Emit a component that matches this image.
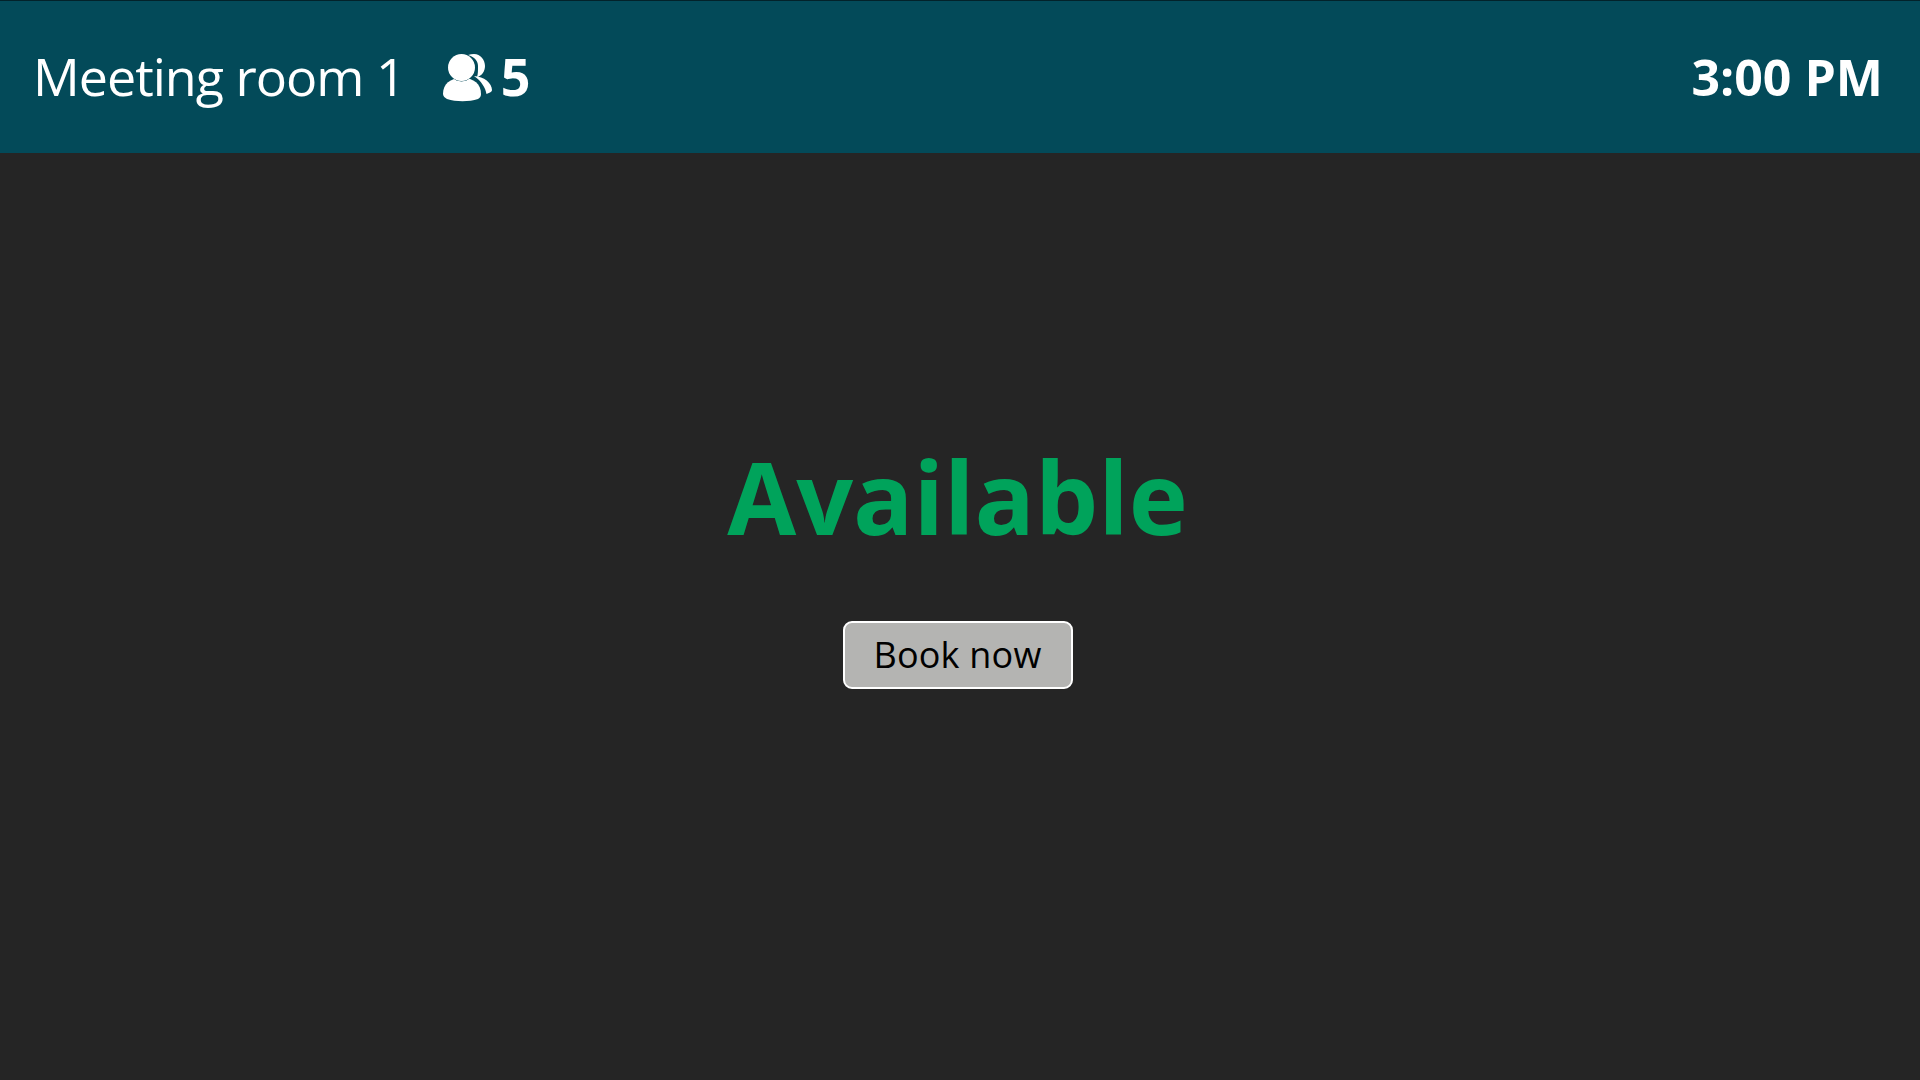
<div class="page">
  <header class="bar">
    <div class="room">
      <span class="name">Meeting room 1</span>
      <svg class="icon" viewBox="0 0 50 48" aria-hidden="true">
        <path d="M25 1c2-.7 4-1 6-1 6.500 0 11 6 11 12 0 5-3 10-8 11 1-3 1-6 1-11 0-4-2-8.500-10-11z" fill="#fff" />
        <path d="M31 22c10 .5 18 7 18 14 0 1-1 2-2 2.500l-3.500 1.500c-1-6-5-13-12.500-18z" fill="#fff" />
        <g fill="#fff" stroke="#034a59" stroke-width="1" paint-order="stroke">
          <path d="M0 40c0-10 7-16 19-16s19 6 19 16c0 2-1 4-3 5-9 3-22 3-31 0-2-1-4-3-4-5z" />
          <circle cx="18.500" cy="13.500" r="13.500" />
        </g>
      </svg>
      <span class="count">5</span>
    </div>
    <span class="time">3:00 PM</span>
  </header>
  <main class="body">
    <h1 class="status">Available</h1>
    <button class="book">Book now</button>
  </main>
</div>

<style>
  :global(body) {
    margin: 0;
    background: #252525;
  }
  .page {
    display: flex;
    flex-direction: column;
    height: 1080px;
    background: #252525;
    font-family: "Open Sans", sans-serif;
    overflow: hidden;
  }
  .bar {
    display: flex;
    align-items: center;
    justify-content: space-between;
    box-sizing: border-box;
    height: 153px;
    padding: 0 37px 1px 33px;
    background: #034a59;
    border-top: 1px solid #02222a;
    color: #fff;
    flex: none;
  }
  .room {
    display: flex;
    align-items: center;
    margin-bottom: 2px;
  }
  .name {
    font-size: 52px;
    letter-spacing: -1px;
  }
  .icon {
    width: 50px;
    height: 48px;
    margin-left: 38px;
    margin-top: 4px;
  }
  .count {
    font-size: 52px;
    font-weight: 700;
    margin-left: 8px;
  }
  .time {
    font-size: 50px;
    font-weight: 700;
  }
  .body {
    flex: 1;
    display: flex;
    flex-direction: column;
    align-items: center;
    padding-top: 278px;
    padding-right: 5px;
  }
  .status {
    margin: 0;
    font-size: 100px;
    line-height: 130px;
    font-weight: 700;
    color: #00a35b;
  }
  .book {
    margin-top: 60px;
    box-sizing: border-box;
    width: 230px;
    height: 68px;
    padding: 0 0 2px;
    background: #b4b4b2;
    border: 2px solid #fff;
    border-radius: 9px;
    color: #000;
    font-family: inherit;
    font-size: 36px;
    letter-spacing: 0.2px;
  }
</style>
